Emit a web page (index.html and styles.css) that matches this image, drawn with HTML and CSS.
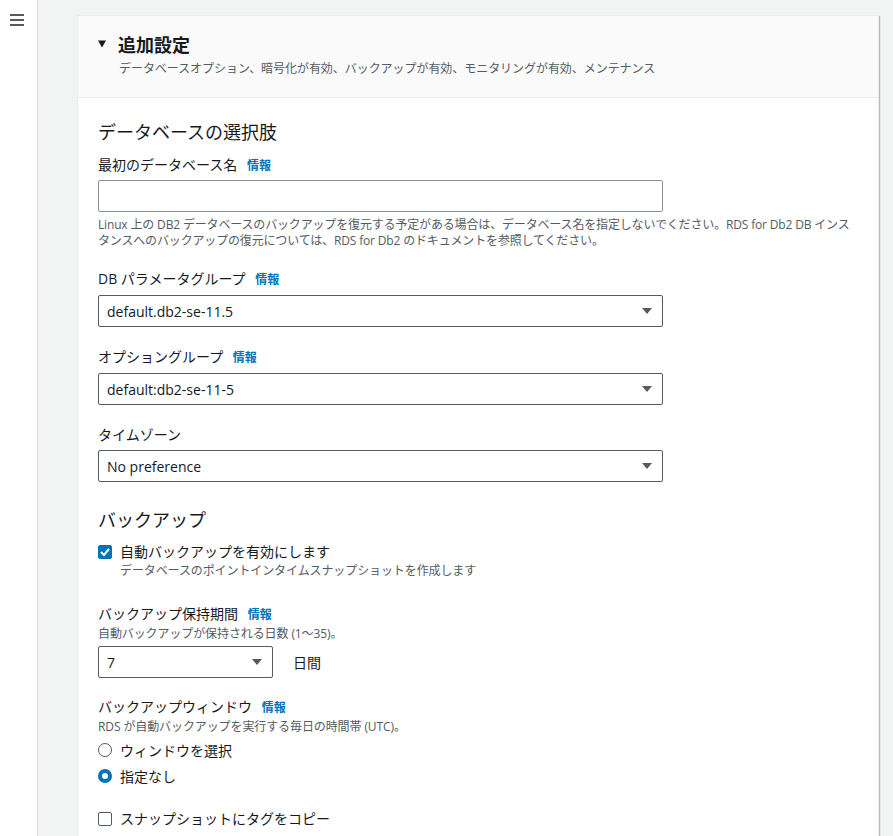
FILE: index.html
```html
<!DOCTYPE html>
<html lang="ja">
<head>
<meta charset="utf-8">
<link rel="stylesheet" href="styles.css">
</head>
<body>
<div class="layout">
  <aside class="sidebar">
    <svg class="menu" width="16" height="14" viewBox="0 0 16 14"><rect x="1" y="1" width="14" height="2" fill="#545b64"/><rect x="1" y="6" width="14" height="2" fill="#545b64"/><rect x="1" y="11" width="14" height="2" fill="#545b64"/></svg>
  </aside>
  <main class="main">
    <section class="card">
      <header class="card-header">
        <div class="title-row">
          <svg class="caret" width="10" height="10" viewBox="0 0 10 10"><polygon points="1,1.5 9,1.5 5,8.5" fill="#16191f"/></svg>
          <h2 class="title">追加設定</h2>
        </div>
        <p class="subtitle">データベースオプション、暗号化が有効、バックアップが有効、モニタリングが有効、メンテナンス</p>
      </header>
      <div class="card-body">
        <h3 class="section-title">データベースの選択肢</h3>

        <div class="field">
          <div class="label">最初のデータベース名 <span class="info">情報</span></div>
          <div class="input"></div>
          <p class="hint">Linux 上の DB2 データベースのバックアップを復元する予定がある場合は、データベース名を指定しないでください。RDS for Db2 DB インスタンスへのバックアップの復元については、RDS for Db2 のドキュメントを参照してください。</p>
        </div>

        <div class="field">
          <div class="label">DB パラメータグループ <span class="info">情報</span></div>
          <div class="select"><span>default.db2-se-11.5</span><svg width="12" height="8" viewBox="0 0 12 8"><polygon points="1,1 11,1 6,7" fill="#545b64"/></svg></div>
        </div>

        <div class="field">
          <div class="label">オプショングループ <span class="info">情報</span></div>
          <div class="select"><span>default:db2-se-11-5</span><svg width="12" height="8" viewBox="0 0 12 8"><polygon points="1,1 11,1 6,7" fill="#545b64"/></svg></div>
        </div>

        <div class="field">
          <div class="label">タイムゾーン</div>
          <div class="select"><span>No preference</span><svg width="12" height="8" viewBox="0 0 12 8"><polygon points="1,1 11,1 6,7" fill="#545b64"/></svg></div>
        </div>

        <h3 class="section-title backup-title">バックアップ</h3>

        <div class="check-row">
          <span class="checkbox checked"><svg width="14" height="14" viewBox="0 0 14 14"><polyline points="3,7 6,10 11,4" fill="none" stroke="#fff" stroke-width="2"/></svg></span>
          <div>
            <div class="check-label">自動バックアップを有効にします</div>
            <div class="check-desc">データベースのポイントインタイムスナップショットを作成します</div>
          </div>
        </div>

        <div class="field retention">
          <div class="label">バックアップ保持期間 <span class="info">情報</span></div>
          <div class="desc">自動バックアップが保持される日数 (1〜35)。</div>
          <div class="inline-row">
            <div class="select small"><span>7</span><svg width="12" height="8" viewBox="0 0 12 8"><polygon points="1,1 11,1 6,7" fill="#545b64"/></svg></div>
            <span class="unit">日間</span>
          </div>
        </div>

        <div class="field window">
          <div class="label">バックアップウィンドウ <span class="info">情報</span></div>
          <div class="desc window-desc">RDS が自動バックアップを実行する毎日の時間帯 (UTC)。</div>
          <div class="radio-row"><span class="radio"></span><span class="radio-label">ウィンドウを選択</span></div>
          <div class="radio-row"><span class="radio selected"></span><span class="radio-label">指定なし</span></div>
        </div>

        <div class="check-row copy-tags">
          <span class="checkbox"></span>
          <div class="check-label">スナップショットにタグをコピー</div>
        </div>
      </div>
    </section>
  </main>
</div>
</body>
</html>
```
FILE: styles.css
```css
* { box-sizing: border-box; }
html, body { margin: 0; padding: 0; }
body {
  background: #f2f3f3;
  font-family: "Open Sans", "Noto Sans CJK JP", sans-serif;
  color: #16191f;
  width: 893px;
  height: 836px;
  overflow: hidden;
}
.layout { display: flex; min-height: 836px; }
.sidebar {
  width: 38px;
  flex: none;
  background: #fff;
  border-right: 1px solid #d5dbdb;
  padding: 13px 0 0 9px;
}
.menu { display: block; }
.main { flex: 1; padding: 15px 14px 0 39px; }
.card {
  background: #fff;
  border: 1px solid #eaeded;
  box-shadow: 1px 1px 1px 0 rgba(0,28,36,0.25);
  min-height: 900px;
}
.card-header {
  background: #fafafa;
  border-bottom: 1px solid #eaeded;
  padding: 17px 20px 19px 19px;
}
.title-row { display: flex; align-items: center; gap: 11px; }
.caret { display: block; }
.title {
  margin: 0;
  font-size: 18px;
  font-weight: 700;
  line-height: 22px;
  font-family: "Noto Sans CJK JP", sans-serif;
}
.subtitle {
  margin: 5px 0 0 22px;
  font-size: 12px;
  line-height: 18px;
  color: #545b64;
  letter-spacing: -0.05px;
}
.card-body { padding: 20px 20px 0 20px; }
.section-title {
  margin: 0;
  font-size: 18px;
  font-weight: 400;
  line-height: 26px;
  font-family: "Noto Sans CJK JP", sans-serif;
}
.field { margin-top: 10px; }
.label {
  font-size: 14px;
  line-height: 22px;
}
.info {
  color: #0073bb;
  font-size: 12px;
  font-weight: 700;
  margin-left: 6px;
}
.input {
  margin-top: 3px;
  width: 565px;
  height: 32px;
  border: 1px solid #879596;
  border-radius: 2px;
  background: #fff;
}
.hint {
  margin: 5px 0 0;
  font-size: 12px;
  line-height: 16px;
  color: #545b64;
  width: 760px;
  letter-spacing: -0.16px;
}
.field + .field { margin-top: 19px; }
.select {
  margin-top: 4px;
  width: 565px;
  height: 32px;
  border: 1px solid #545b64;
  border-radius: 2px;
  background: #fff;
  display: flex;
  align-items: center;
  justify-content: space-between;
  padding: 0 9px 0 8px;
  font-size: 14px;
}
.select.small { width: 175px; margin-top: 0; }
.backup-title { margin-top: 24px; }
.check-row { display: flex; gap: 8px; align-items: flex-start; margin-top: 9px; }
.checkbox {
  flex: none;
  width: 14px;
  height: 14px;
  margin-top: 4px;
  border: 1.5px solid #545b64;
  border-radius: 2px;
  display: flex;
  align-items: center;
  justify-content: center;
}
.checkbox.checked { background: #0073bb; border-color: #0073bb; }
.checkbox.checked svg { flex: none; }
.check-label { font-size: 14px; line-height: 22px; }
.check-desc { font-size: 12px; line-height: 16px; color: #545b64; letter-spacing: -0.1px; }
.field.retention { margin-top: 24px; }
.desc { font-size: 12px; line-height: 16px; color: #545b64; margin-bottom: 4px; letter-spacing: -0.1px; }
.window-desc { margin-bottom: 2px; }
.inline-row { display: flex; align-items: center; gap: 20px; }
.unit { font-size: 14px; }
.field.window { margin-top: 18px; }
.radio-row { display: flex; align-items: center; gap: 8px; height: 26px; }
.radio {
  width: 14px; height: 14px;
  border: 1.5px solid #545b64;
  border-radius: 50%;
  flex: none;
}
.radio.selected { border: 4px solid #0073bb; }
.radio-label { font-size: 14px; }
.copy-tags { margin-top: 19px; }
```
